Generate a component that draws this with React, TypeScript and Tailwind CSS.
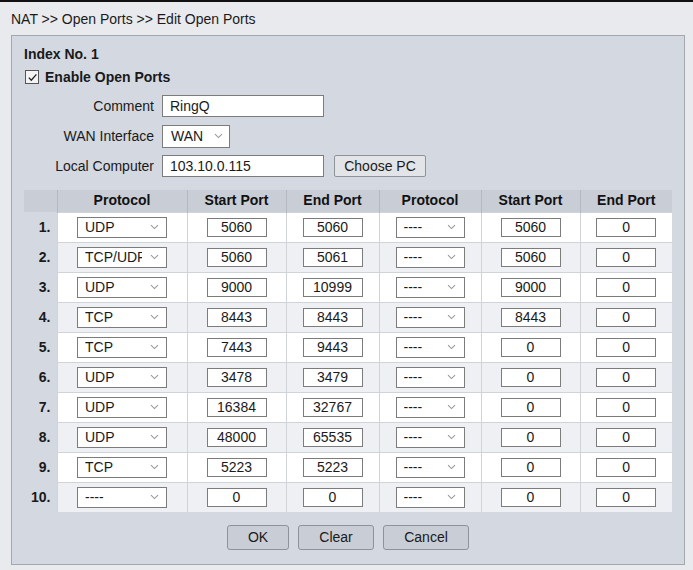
import React from "react";

type Row = {
  p1: string;
  s1: string;
  e1: string;
  p2: string;
  s2: string;
  e2: string;
};

const rows: Row[] = [
  { p1: "UDP", s1: "5060", e1: "5060", p2: "----", s2: "5060", e2: "0" },
  { p1: "TCP/UDP", s1: "5060", e1: "5061", p2: "----", s2: "5060", e2: "0" },
  { p1: "UDP", s1: "9000", e1: "10999", p2: "----", s2: "9000", e2: "0" },
  { p1: "TCP", s1: "8443", e1: "8443", p2: "----", s2: "8443", e2: "0" },
  { p1: "TCP", s1: "7443", e1: "9443", p2: "----", s2: "0", e2: "0" },
  { p1: "UDP", s1: "3478", e1: "3479", p2: "----", s2: "0", e2: "0" },
  { p1: "UDP", s1: "16384", e1: "32767", p2: "----", s2: "0", e2: "0" },
  { p1: "UDP", s1: "48000", e1: "65535", p2: "----", s2: "0", e2: "0" },
  { p1: "TCP", s1: "5223", e1: "5223", p2: "----", s2: "0", e2: "0" },
  { p1: "----", s1: "0", e1: "0", p2: "----", s2: "0", e2: "0" },
];

function Chevron() {
  return (
    <svg width="9" height="6" viewBox="0 0 9 6" className="shrink-0">
      <path d="M1 1.2 L4.5 4.6 L8 1.2" fill="none" stroke="#9a9a9a" strokeWidth="1.1" />
    </svg>
  );
}

function FakeSelect({ value, wide }: { value: string; wide: boolean }) {
  return (
    <div
      className={`${wide ? "w-[90px]" : "w-[69px]"} h-[21px] bg-white border border-[#7c7c7c] flex items-center pl-[7px] text-[14px] leading-none text-[#1a1a1a] overflow-hidden`}
    >
      <span className={`${wide ? "w-[57px]" : "w-[36px]"} shrink-0 whitespace-nowrap overflow-hidden`}>{value}</span>
      <span className="flex-1 flex justify-center">
        <Chevron />
      </span>
    </div>
  );
}

function PortBox({ value }: { value: string }) {
  return (
    <div className="w-[60px] h-[19px] bg-white border border-[#7c7c7c] flex items-center justify-center text-[14px] leading-none text-[#1a1a1a]">
      {value}
    </div>
  );
}

function Btn({ label, width }: { label: string; width: string }) {
  return (
    <button
      className={`${width} h-[25px] bg-[#c9cdd5] border border-[#8e939b] rounded-[3px] text-[14px] text-[#1a1a1a] flex items-center justify-center`}
    >
      {label}
    </button>
  );
}

export default function App() {
  const th = "h-[22px] bg-[#c9cdd5] border-l border-[#b4b8c0] text-[14px] font-bold text-[#111] text-center p-0";
  const td = "h-[30px] border-l border-t border-[#d0d3d8] p-0";
  return (
    <div
      className="w-[693px] h-[570px] bg-[#e9eaee] border-t-2 border-[#111] overflow-hidden text-[#1a1a1a]"
      style={{ fontFamily: '"Liberation Sans", Arial, sans-serif' }}
    >
      <div className="pl-[11px] pt-[7px] h-[33px] text-[14px] leading-[20px]">NAT &gt;&gt; Open Ports &gt;&gt; Edit Open Ports</div>

      <div className="ml-[11px] w-[674px] h-[530px] bg-[#d4d8e0] border border-[#a3a7ae] pl-[12px] pt-[9px]">
        <div className="text-[14px] font-bold leading-[18px] h-[18px]">Index No. 1</div>

        <div className="flex items-center h-[22px] mt-[3px]">
          <span className="w-[14px] h-[14px] ml-[1px] border border-[#555] bg-[#f4f4f4] flex items-center justify-center">
            <svg width="11" height="11" viewBox="0 0 11 11">
              <path d="M1.8 5.6 L4.3 8.2 L9.4 2.4" fill="none" stroke="#222" strokeWidth="1.3" />
            </svg>
          </span>
          <span className="ml-[6px] text-[14px] font-bold">Enable Open Ports</span>
        </div>

        <div className="mt-[7px] flex flex-col gap-[8px]">
          <div className="flex items-center h-[22px]">
            <span className="w-[130px] text-right text-[14px] pr-0">Comment</span>
            <div className="ml-[8px] w-[162px] h-[22px] bg-white border border-[#7c7c7c] flex items-center pl-[7px] text-[14px]">
              RingQ
            </div>
          </div>
          <div className="flex items-center h-[22px]">
            <span className="w-[130px] text-right text-[14px]">WAN Interface</span>
            <div className="ml-[8px]">
              <div className="w-[68px] h-[23px] bg-white border border-[#7c7c7c] flex items-center pl-[8px] pr-[6px] text-[14px]">
                <span className="flex-1">WAN</span>
                <Chevron />
              </div>
            </div>
          </div>
          <div className="flex items-center h-[22px]">
            <span className="w-[130px] text-right text-[14px]">Local Computer</span>
            <div className="ml-[8px] w-[162px] h-[22px] bg-white border border-[#7c7c7c] flex items-center pl-[7px] text-[14px]">
              103.10.0.115
            </div>
            <button className="ml-[10px] w-[92px] h-[22px] bg-[#e2e4e8] border border-[#8e939b] rounded-[2px] text-[14px] flex items-center justify-center">
              Choose PC
            </button>
          </div>
        </div>

        <table className="mt-[13px] w-[648px] border-collapse table-fixed">
          <colgroup>
            <col className="w-[33px]" />
            <col className="w-[130px]" />
            <col className="w-[99px]" />
            <col className="w-[93px]" />
            <col className="w-[102px]" />
            <col className="w-[99px]" />
            <col className="w-[92px]" />
          </colgroup>
          <thead>
            <tr>
              <th className="h-[22px] bg-[#c9cdd5] p-0"></th>
              <th className={th}>Protocol</th>
              <th className={th}>Start Port</th>
              <th className={th}>End Port</th>
              <th className={th}>Protocol</th>
              <th className={th}>Start Port</th>
              <th className={th}>End Port</th>
            </tr>
          </thead>
          <tbody>
            {rows.map((r, i) => {
              const bg = i % 2 === 0 ? "bg-white" : "bg-[#eef0f3]";
              return (
                <tr key={i} className={bg}>
                  <td className="h-[30px] bg-[#d4d8e0] text-right pr-[6px] text-[14px] font-bold p-0">{i + 1}.</td>
                  <td className={td}>
                    <div className="flex justify-center">
                      <FakeSelect value={r.p1} wide={true} />
                    </div>
                  </td>
                  <td className={td}>
                    <div className="flex justify-center">
                      <PortBox value={r.s1} />
                    </div>
                  </td>
                  <td className={td}>
                    <div className="flex justify-center">
                      <PortBox value={r.e1} />
                    </div>
                  </td>
                  <td className={td}>
                    <div className="flex justify-center">
                      <FakeSelect value={r.p2} wide={false} />
                    </div>
                  </td>
                  <td className={td}>
                    <div className="flex justify-center">
                      <PortBox value={r.s2} />
                    </div>
                  </td>
                  <td className={td}>
                    <div className="flex justify-center">
                      <PortBox value={r.e2} />
                    </div>
                  </td>
                </tr>
              );
            })}
          </tbody>
        </table>

        <div className="mt-[13px] flex justify-center gap-[9px] w-[648px]">
          <Btn label="OK" width="w-[62px]" />
          <Btn label="Clear" width="w-[76px]" />
          <Btn label="Cancel" width="w-[86px]" />
        </div>
      </div>
    </div>
  );
}
